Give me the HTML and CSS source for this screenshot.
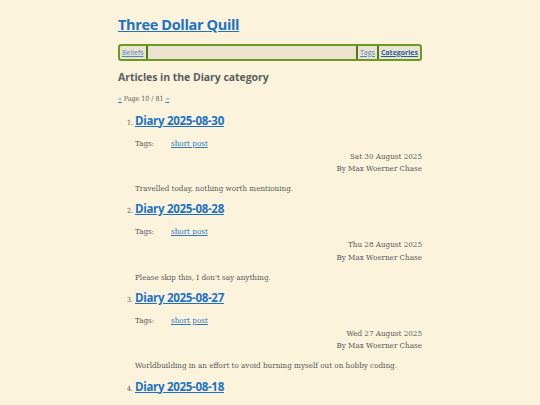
FILE: index.html
```html
<!DOCTYPE html>
<html lang="en">
<head>
<meta charset="utf-8">
<title>Articles in the Diary category — Three Dollar Quill</title>
<link rel="stylesheet" href="styles.css">
</head>
<body>
<div class="page">
  <header>
    <h1 class="site-title"><a href="#">Three Dollar Quill</a></h1>
    <nav class="menu">
      <a class="sep-right" href="#">Beliefs</a>
      <span class="spacer"></span>
      <a class="sep-left sep-right" href="#">Tags</a>
      <a class="current" href="#">Categories</a>
    </nav>
  </header>
  <main>
    <h2 class="page-heading">Articles in the Diary category</h2>
    <p class="pager"><a href="#">«</a> Page 10 / 81 <a href="#">»</a></p>
    <ol class="articles" start="1">
      <li class="article">
        <h3 class="article-title"><a href="#">Diary 2025-08-30</a></h3>
        <div class="tags"><span class="tags-label">Tags:</span><a href="#">short post</a></div>
        <div class="meta"><div>Sat 30 August 2025</div><div>By Max Woerner Chase</div></div>
        <p class="summary">Travelled today, nothing worth mentioning.</p>
      </li>
      <li class="article">
        <h3 class="article-title"><a href="#">Diary 2025-08-28</a></h3>
        <div class="tags"><span class="tags-label">Tags:</span><a href="#">short post</a></div>
        <div class="meta"><div>Thu 28 August 2025</div><div>By Max Woerner Chase</div></div>
        <p class="summary">Please skip this, I don't say anything.</p>
      </li>
      <li class="article">
        <h3 class="article-title"><a href="#">Diary 2025-08-27</a></h3>
        <div class="tags"><span class="tags-label">Tags:</span><a href="#">short post</a></div>
        <div class="meta"><div>Wed 27 August 2025</div><div>By Max Woerner Chase</div></div>
        <p class="summary">Worldbuilding in an effort to avoid burning myself out on hobby coding.</p>
      </li>
      <li class="article">
        <h3 class="article-title"><a href="#">Diary 2025-08-18</a></h3>
        <div class="tags"><span class="tags-label">Tags:</span><a href="#">short post</a></div>
        <div class="meta"><div>Mon 18 August 2025</div><div>By Max Woerner Chase</div></div>
        <p class="summary">Nothing much today.</p>
      </li>
    </ol>
  </main>
</div>
</body>
</html>
```
FILE: styles.css
```css
html, body {
  margin: 0;
  background: #fbf3dc;
}
body {
  font-family: "DejaVu Serif", serif;
  font-stretch: condensed;
  font-size: 8px;
  color: #5a5a5a;
}
a {
  color: #2f78c4;
}
.page {
  width: 304px;
  margin: 0 auto;
  padding-top: 15px;
}
.site-title {
  margin: 0;
  font: 700 14.5px/20px "Open Sans", sans-serif;
  letter-spacing: -0.35px;
}
.site-title a {
  color: #1d72c6;
}
.menu {
  margin-top: 9px;
  height: 13px;
  display: flex;
  align-items: stretch;
  border: 2px solid #6a9a22;
  border-radius: 3px;
  background: #ebe3cf;
  padding: 0;
  font: 400 7px/13px "Open Sans", sans-serif;
}
.menu a {
  color: #4f86c3;
  padding: 0 2px;
  display: flex;
  align-items: center;
}
.menu .sep-right {
  border-right: 2px solid #4d7d12;
}
.menu .sep-left {
  border-left: 2px solid #4d7d12;
}
.menu .current {
  font-weight: 700;
  color: #2b5f9a;
}
.menu .spacer {
  flex: 1;
}
.page-heading {
  margin: 8.5px 0 0;
  font: 700 10.5px/14px "Open Sans", sans-serif;
  letter-spacing: -0.05px;
  color: #5a5f60;
}
.pager {
  margin: 10.5px 0 0;
  line-height: 10px;
  font-size: 7px;
}
.articles {
  margin: 8.5px 0 0;
  padding-left: 17px;
}
.article::marker {
  font-size: 7px;
  color: #5a5a5a;
}
.article {
  padding-bottom: 7.2px;
}
.article-title {
  margin: 0;
  font: 700 11.5px/16px "Open Sans", sans-serif;
  letter-spacing: -0.3px;
}
.article-title a {
  color: #1d72c6;
}
.tags {
  margin-top: 10px;
  display: flex;
  line-height: 10px;
}
.tags-label {
  width: 36px;
}
.meta {
  margin-top: 2px;
  text-align: right;
  line-height: 12.5px;
}
.summary {
  margin: 8.5px 0 0;
  line-height: 10px;
}
```
